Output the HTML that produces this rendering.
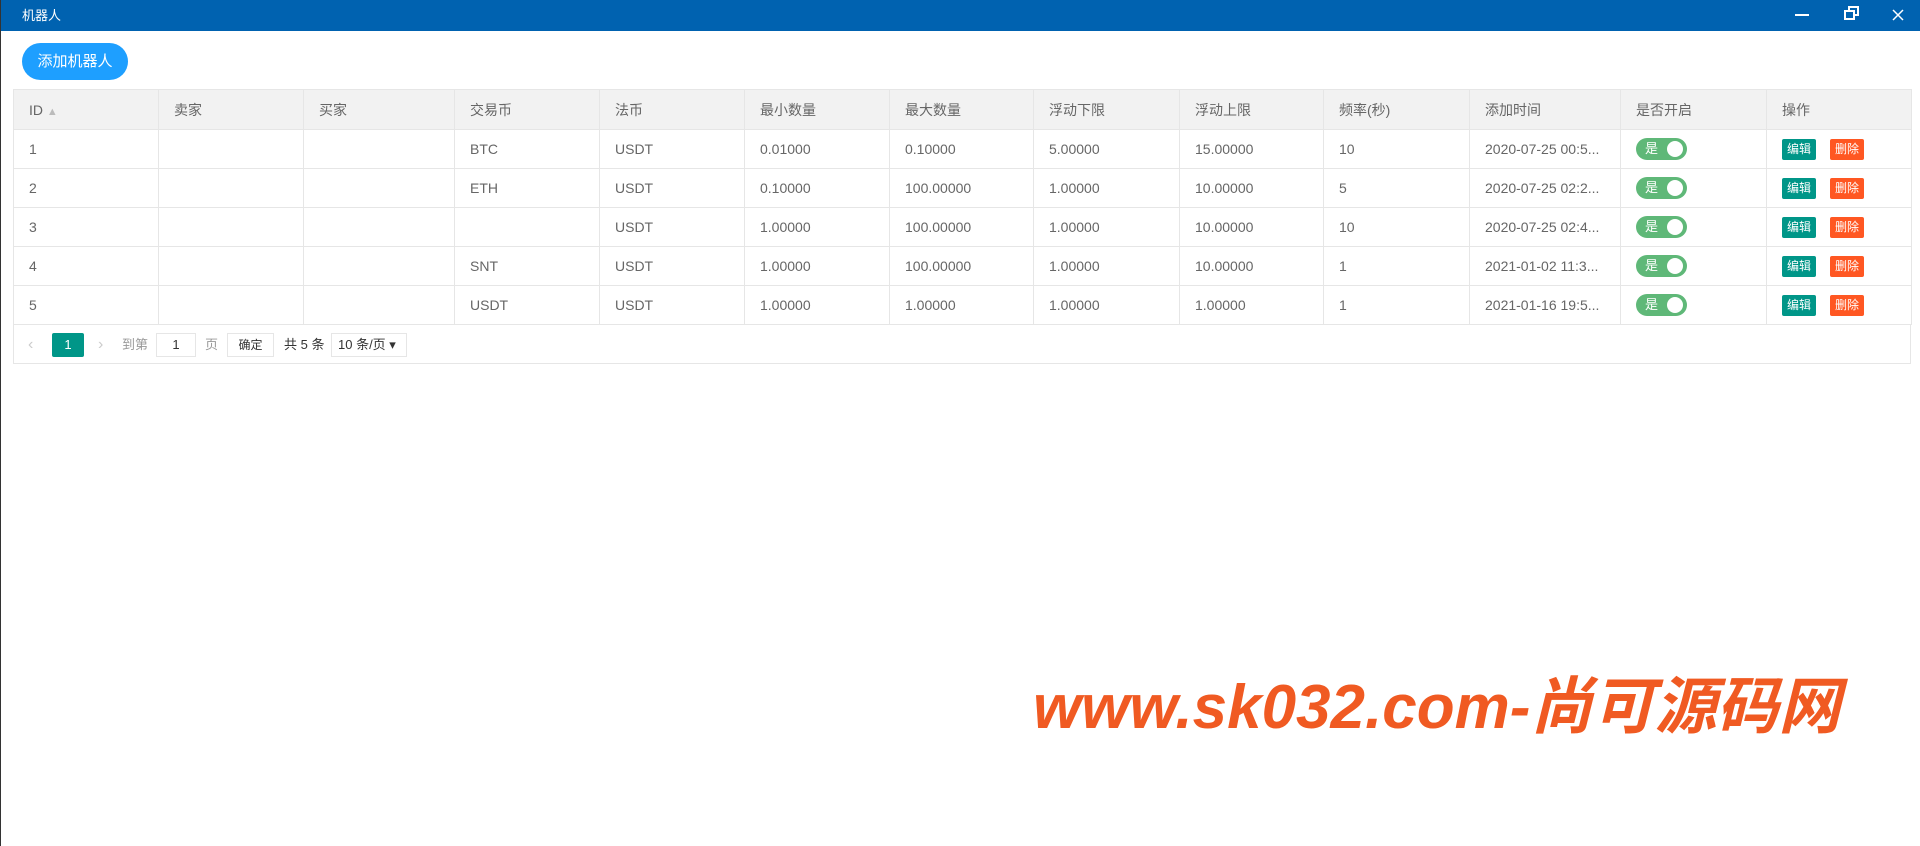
<!DOCTYPE html>
<html><head><meta charset="utf-8"><style>
*{box-sizing:border-box;margin:0;padding:0}
body{width:1920px;height:846px;background:#fff;font-family:"Liberation Sans","Noto Sans CJK SC",sans-serif;color:#666;position:relative;overflow:hidden;border-left:1px solid #333}
.top{position:absolute;left:0;top:0;width:1920px;height:31px;background:#0062b0;color:#fff;font-size:13px;line-height:31px;padding-left:21px}
.ctl{position:absolute;top:0;height:31px;color:#fff}
.btn{position:absolute;left:21px;top:43px;width:106px;height:37px;border-radius:19px;background:#1E9FFF;color:#fff;font-size:15px;line-height:37px;text-align:center}
table{position:absolute;left:12px;top:89px;width:1898px;border-collapse:collapse;font-size:14px;table-layout:fixed}
td,th{border:1px solid #e6e6e6;height:39px;padding:0 15px;text-align:left;font-weight:normal;white-space:nowrap;overflow:hidden;text-overflow:ellipsis}
th{background:#f2f2f2;height:40px}
.sw{display:inline-block;width:51px;height:22px;border-radius:11px;background:#5FB878;color:#fff;font-size:13px;line-height:22px;padding-left:9px;position:relative;vertical-align:middle}
.sw:after{content:"";position:absolute;right:4px;top:3px;width:16px;height:16px;border-radius:50%;background:#fff}
.e,.d{display:inline-block;width:34px;height:21px;color:#fff;font-size:12px;line-height:21px;text-align:center;border-radius:2px;vertical-align:middle}
.e{background:#009688;margin-right:14px}.d{background:#FF5722}
.pg{position:absolute;left:12px;top:324px;width:1898px;height:40px;border:1px solid #e6e6e6;border-top:none;font-size:13px}
.pg span{position:absolute;top:9px;line-height:23px}
.wm{position:absolute;left:1032px;top:656px;font-size:62px;font-style:italic;font-weight:bold;color:#f05a22;white-space:nowrap;font-family:"Liberation Sans","Noto Sans CJK SC",sans-serif}
</style></head><body>
<div class="top">机器人</div>
<svg class="ctl" style="left:1790px" width="22" height="31"><line x1="4" y1="15" x2="18" y2="15" stroke="#fff" stroke-width="2"/></svg>
<svg class="ctl" style="left:1840px" width="22" height="31"><rect x="4" y="11" width="9" height="8" fill="none" stroke="#fff" stroke-width="2"/><path d="M8 10V7h9v8h-3" fill="none" stroke="#fff" stroke-width="2"/></svg>
<svg class="ctl" style="left:1886px" width="22" height="31"><path d="M6 10l10 10M16 10L6 20" stroke="#fff" stroke-width="1.5"/></svg>
<div class="btn">添加机器人</div>
<table>
<colgroup><col style="width:145px"><col style="width:145px"><col style="width:151px"><col style="width:145px"><col style="width:145px"><col style="width:145px"><col style="width:144px"><col style="width:146px"><col style="width:144px"><col style="width:146px"><col style="width:151px"><col style="width:146px"><col style="width:145px"></colgroup>
<tr><th>ID <span style="color:#bbb;font-size:11px">&#9650;</span></th><th>卖家</th><th>买家</th><th>交易币</th><th>法币</th><th>最小数量</th><th>最大数量</th><th>浮动下限</th><th>浮动上限</th><th>频率(秒)</th><th>添加时间</th><th>是否开启</th><th>操作</th></tr>
<tr><td>1</td><td></td><td></td><td>BTC</td><td>USDT</td><td>0.01000</td><td>0.10000</td><td>5.00000</td><td>15.00000</td><td>10</td><td>2020-07-25 00:5...</td><td><span class="sw">是</span></td><td><span class="e">编辑</span><span class="d">删除</span></td></tr>
<tr><td>2</td><td></td><td></td><td>ETH</td><td>USDT</td><td>0.10000</td><td>100.00000</td><td>1.00000</td><td>10.00000</td><td>5</td><td>2020-07-25 02:2...</td><td><span class="sw">是</span></td><td><span class="e">编辑</span><span class="d">删除</span></td></tr>
<tr><td>3</td><td></td><td></td><td></td><td>USDT</td><td>1.00000</td><td>100.00000</td><td>1.00000</td><td>10.00000</td><td>10</td><td>2020-07-25 02:4...</td><td><span class="sw">是</span></td><td><span class="e">编辑</span><span class="d">删除</span></td></tr>
<tr><td>4</td><td></td><td></td><td>SNT</td><td>USDT</td><td>1.00000</td><td>100.00000</td><td>1.00000</td><td>10.00000</td><td>1</td><td>2021-01-02 11:3...</td><td><span class="sw">是</span></td><td><span class="e">编辑</span><span class="d">删除</span></td></tr>
<tr><td>5</td><td></td><td></td><td>USDT</td><td>USDT</td><td>1.00000</td><td>1.00000</td><td>1.00000</td><td>1.00000</td><td>1</td><td>2021-01-16 19:5...</td><td><span class="sw">是</span></td><td><span class="e">编辑</span><span class="d">删除</span></td></tr>
</table>
<div class="pg">
<span style="left:14px;color:#ccc;font-size:16px">&#8249;</span>
<span style="left:38px;width:32px;height:24px;background:#009688;color:#fff;text-align:center;border-radius:2px">1</span>
<span style="left:84px;color:#ccc;font-size:16px">&#8250;</span>
<span style="left:108px;color:#999">到第</span>
<span style="left:142px;width:40px;height:24px;border:1px solid #e6e6e6;text-align:center;color:#333;line-height:22px">1</span>
<span style="left:191px;color:#999">页</span>
<span style="left:213px;width:47px;height:24px;border:1px solid #e6e6e6;text-align:center;color:#333;line-height:22px;font-size:12px">确定</span>
<span style="left:270px;color:#333">共 5 条</span>
<span style="left:317px;width:76px;height:24px;border:1px solid #e6e6e6;color:#333;line-height:22px;padding-left:6px">10 条/页 &#9662;</span>
</div>
<div class="wm">www.sk032.com-尚可源码网</div>
</body></html>
